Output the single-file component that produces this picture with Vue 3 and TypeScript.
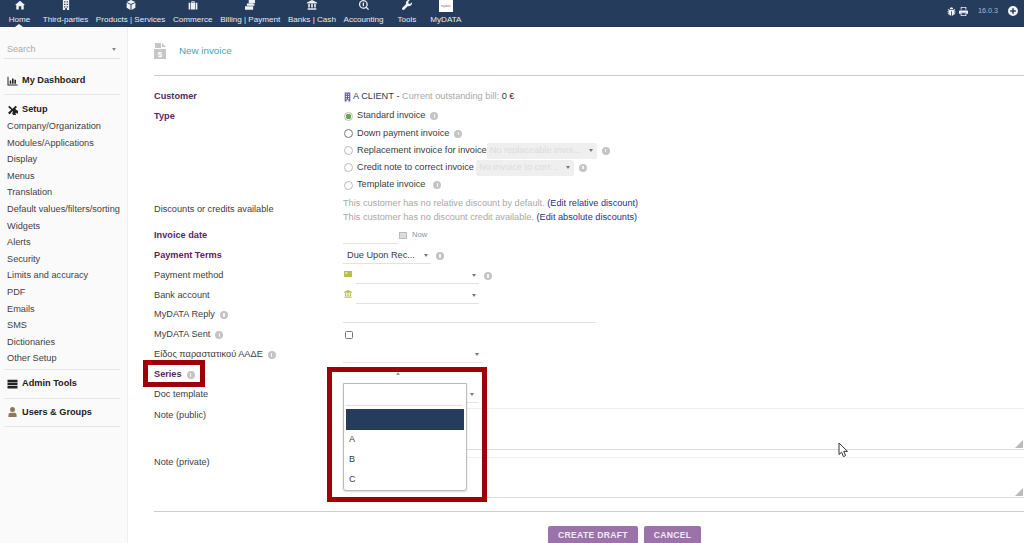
<script setup lang="ts">
const P: Record<string, string> = {
  home: 'M8 1 L16 8 L14 8 L14 15 L10 15 L10 10 L6 10 L6 15 L2 15 L2 8 L0 8 Z',
  building: 'M3 0H13V16H9.5V13H6.5V16H3Z M5 2V4H7V2Z M9 2V4H11V2Z M5 6V8H7V6Z M9 6V8H11V6Z M5 10V12H7V10Z M9 10V12H11V10Z',
  cube: 'M8 0 L15 3 L8 6.5 L1 3Z M1 4.5 L7.2 7.7 V16 L1 12.5Z M15 4.5 V12.5 L8.8 16 V7.7Z',
  briefcase: 'M5.5 2H10.5V4.5H9.2V3.3H6.8V4.5H5.5Z M1 4.5H3.4V15H1Z M4.4 4.5H11.6V15H4.4Z M12.6 4.5H15V15H12.6Z',
  money: 'M6 0H16V5H6Z M3 5.5H13.5V6.5H15V9H3Z M0 10H13V15.5H0Z',
  bank: 'M8 0 L16 4 V5.5 H0 V4Z M2 6.5H4.5V12H2Z M6.7 6.5H9.3V12H6.7Z M11.5 6.5H14V12H11.5Z M1 13H15V15.5H1Z',
  search: 'M7 0a7 7 0 0 1 5.6 11.2L16 14.6 14.6 16l-3.4-3.4A7 7 0 1 1 7 0Zm0 2a5 5 0 1 0 0 10A5 5 0 0 0 7 2Zm-1 2h2v6H6Z',
  wrench: 'M15.7 3.6 13 6.2 10.5 5.6 9.9 3.1 12.5.4A4.6 4.6 0 0 0 6.6 6.5L.6 12.5a2 2 0 0 0 2.9 2.9l6-6a4.6 4.6 0 0 0 6.2-5.8Z',
  bug: 'M5 3.5a3 3 0 0 1 6 0Z M4 5H12L13.5 3.6 14.6 4.7 13 6.3V8H15.5V9.5H13V10.6L14.8 12.4 13.7 13.5 12.4 12.3A4 4 0 0 1 8.7 15.5V7.5H7.3V15.5A4 4 0 0 1 3.6 12.3L2.3 13.5 1.2 12.4 3 10.6V9.5H.5V8H3V6.3L1.4 4.7 2.5 3.6Z',
  print: 'M3 0H13V5H11.5V1.5H4.5V5H3Z M1.5 6H14.5A1.5 1.5 0 0 1 16 7.5V12H13V10H3V12H0V7.5A1.5 1.5 0 0 1 1.5 6Z M4.5 11.5H11.5V14.5H4.5Z M3 11V16H13V11',
  plus: 'M8 0a8 8 0 1 1 0 16A8 8 0 0 1 8 0Zm-1.2 3.5v3.3H3.5v2.4h3.3v3.3h2.4V9.2h3.3V6.8H9.2V3.5Z',
  chart: 'M0 1H1.6V13.4H16V15H0Z M3.5 7H6V12.4H3.5Z M7.2 4H9.7V12.4H7.2Z M11 6H13.5V12.4H11Z',
  tools: 'M1 3 3 1 8 6 13 1 15.2 3.2 12.5 6 14.8 8.2 A3 3 0 0 1 15.5 14 L14 12.5 12.4 14 14 15.6 A3 3 0 0 1 8.6 11 L8 9.6 3.5 15 .8 12.5 6 7.6Z',
  server: 'M0 1H16V5H0Z M0 6H16V10H0Z M0 11H16V15H0Z',
  user: 'M8 0a4 4 0 1 1 0 8A4 4 0 0 1 8 0Z M1.5 16V12.5A3.5 3.5 0 0 1 5 9H11A3.5 3.5 0 0 1 14.5 12.5V16Z',
  card: 'M0 2H16V14H0Z M2 5V7H7V5Z',
  file: 'M1 0H7V5H1Z M8 0 L12 4 H8Z M0 6H12V16H0Z'
}
const nav = [
  { t: 'Home', i: 'home' },
  { t: 'Third-parties', i: 'building' },
  { t: 'Products | Services', i: 'cube' },
  { t: 'Commerce', i: 'briefcase' },
  { t: 'Billing | Payment', i: 'money' },
  { t: 'Banks | Cash', i: 'bank' },
  { t: 'Accounting', i: 'search' },
  { t: 'Tools', i: 'wrench' }
]
const setup = ['Company/Organization', 'Modules/Applications', 'Display', 'Menus', 'Translation', 'Default values/filters/sorting', 'Widgets', 'Alerts', 'Security', 'Limits and accuracy', 'PDF', 'Emails', 'SMS', 'Dictionaries', 'Other Setup']
</script>

<template>
  <div class="page">
    <header class="top">
      <nav class="nav">
        <a v-for="n in nav" :key="n.t" class="nav-item">
          <svg class="nav-ico" viewBox="0 0 16 16"><path :d="P[n.i]" fill-rule="evenodd" /></svg>
          <span>{{ n.t }}</span>
        </a>
        <a class="nav-item">
          <span class="logo">mydata</span>
          <span>MyDATA</span>
        </a>
      </nav>
      <i class="notch"></i>
      <div class="top-right">
        <svg class="tr-ico" viewBox="0 0 16 16"><path :d="P.bug" /></svg>
        <svg class="tr-ico print" viewBox="0 0 16 16"><path :d="P.print" fill-rule="evenodd" /></svg>
        <span class="ver">16.0.3</span>
        <svg class="tr-ico plus" viewBox="0 0 16 16"><path :d="P.plus" fill-rule="evenodd" /></svg>
      </div>
    </header>

    <div class="body">
      <aside class="side">
        <div class="search"><span>Search</span><b class="arrow grey"></b></div>
        <div class="sec dash">
          <div class="sec-title"><svg viewBox="0 0 16 16"><path :d="P.chart" /></svg>My Dashboard</div>
        </div>
        <div class="sec setup">
          <div class="sec-title"><svg viewBox="0 0 16 16"><path :d="P.tools" /></svg>Setup</div>
          <a v-for="s in setup" :key="s" class="side-link">{{ s }}</a>
        </div>
        <div class="sec">
          <div class="sec-title"><svg viewBox="0 0 16 16"><path :d="P.server" /></svg>Admin Tools</div>
        </div>
        <div class="sec">
          <div class="sec-title"><svg class="brown" viewBox="0 0 16 16"><path :d="P.user" /></svg>Users &amp; Groups</div>
        </div>
      </aside>

      <main class="main">
        <div class="title-row">
          <svg class="title-ico" viewBox="0 0 12 16"><path :d="P.file" /><text x="6" y="14.2" text-anchor="middle" class="dollar">$</text></svg>
          <span class="title">New invoice</span>
        </div>

        <section class="form">
          <div class="row h19"><label class="req">Customer</label>
            <div class="val client">
              <svg class="bld" viewBox="0 0 16 16"><path :d="P.building" fill-rule="evenodd" /></svg>
              <span class="cname">A CLIENT</span> - <span class="mut">Current outstanding bill:</span> 0 €
            </div>
          </div>

          <div class="row type"><label class="req top-l">Type</label>
            <div class="opts">
              <div class="opt h18"><i class="radio on"></i>Standard invoice<i class="info"></i></div>
              <div class="opt h17"><i class="radio dark"></i>Down payment invoice<i class="info"></i></div>
              <div class="opt h17"><i class="radio"></i>Replacement invoice for invoice<span class="dis w1"><em>No replaceable invoi...</em><b class="arrow"></b></span><i class="info"></i></div>
              <div class="opt h17"><i class="radio"></i>Credit note to correct invoice<span class="dis w2"><em>No invoice to corr...</em><b class="arrow"></b></span><i class="info"></i></div>
              <div class="opt h18"><i class="radio"></i>Template invoice<i class="info wide"></i></div>
            </div>
          </div>

          <div class="row disc"><label>Discounts or credits available</label>
            <div class="val lines">
              <div><span class="mut">This customer has no relative discount by default.</span> <a class="lnk">(Edit relative discount)</a></div>
              <div><span class="mut">This customer has no discount credit available.</span> <a class="lnk">(Edit absolute discounts)</a></div>
            </div>
          </div>

          <div class="row"><label class="req">Invoice date</label>
            <div class="val"><span class="line w-date"></span><i class="cal"></i><span class="now">Now</span></div>
          </div>
          <div class="row"><label class="req">Payment Terms</label>
            <div class="val"><span class="sel w-terms"><span>Due Upon Rec...</span><b class="arrow"></b></span><i class="info"></i></div>
          </div>
          <div class="row"><label>Payment method</label>
            <div class="val"><svg class="lime" viewBox="0 0 16 16"><path :d="P.card" fill-rule="evenodd" /></svg><span class="sel w-pay"><b class="arrow"></b></span><i class="info"></i></div>
          </div>
          <div class="row h19"><label>Bank account</label>
            <div class="val"><svg class="lime" viewBox="0 0 16 16"><path :d="P.bank" /></svg><span class="sel w-pay"><b class="arrow"></b></span></div>
          </div>
          <div class="row"><label>MyDATA Reply<i class="info"></i></label>
            <div class="val"><span class="line w-reply"></span></div>
          </div>
          <div class="row"><label>MyDATA Sent<i class="info"></i></label>
            <div class="val"><i class="check"></i></div>
          </div>
          <div class="row"><label>Είδος παραστατικού ΑΑΔΕ<i class="info"></i></label>
            <div class="val"><span class="sel w-eidos"><b class="arrow"></b></span></div>
          </div>
          <div class="row"><label class="req">Series<i class="info"></i></label>
            <div class="val"></div>
          </div>
          <div class="row"><label>Doc template</label>
            <div class="val"><span class="sel w-doc"><b class="arrow"></b></span></div>
          </div>
          <div class="row note h49"><label class="top-l">Note (public)</label>
            <div class="ta h41"><i class="grip"></i></div>
          </div>
          <div class="row note h48"><label class="top-l priv">Note (private)</label>
            <div class="ta h40"><i class="grip"></i></div>
          </div>
        </section>

        <div class="actions">
          <button class="btn">CREATE DRAFT</button>
          <button class="btn">CANCEL</button>
        </div>
      </main>
    </div>

    <div class="caret-up"></div>
    <div class="menu">
      <div class="menu-search"></div>
      <div class="menu-item hl"></div>
      <div class="menu-item">A</div>
      <div class="menu-item">B</div>
      <div class="menu-item">C</div>
    </div>
    <div class="mark mark-series"></div>
    <div class="mark mark-menu"></div>
    <svg class="cursor" viewBox="0 0 12 16"><path d="M1 1V12.5L3.6 10.2 5.4 14.6 7.6 13.6 5.8 9.4H9.5Z" /></svg>
  </div>
</template>

<style>
html, body { margin: 0; background: #fff; overflow: hidden; }
</style>

<style scoped>
.page { position: relative; width: 1024px; height: 543px; overflow: hidden; font: 9.2px/1.2 "Liberation Sans", Arial, sans-serif; color: #3b3b3b; background: #fff; }
.top { position: relative; display: flex; justify-content: space-between; height: 27px; background: #263c5c; color: #e6eaf0; }
.nav { display: flex; }
.nav-item { display: flex; flex-direction: column; align-items: center; min-width: 39px; padding: 0 3.8px; box-sizing: border-box; font-size: 8.1px; line-height: 10px; white-space: nowrap; }
.nav-ico { width: 10px; height: 10px; margin: 0 0 5px; fill: #eef1f5; }
.logo { display: block; width: 14px; height: 12px; margin-bottom: 3px; background: #fff; color: #777; font-size: 3px; line-height: 12px; text-align: center; }
.notch { position: absolute; left: 15px; top: 24px; border: 4px solid transparent; border-top: 0; border-bottom: 3px solid #fff; }
.top-right { display: flex; align-items: center; padding: 0 6px 5px 0; }
.tr-ico { width: 9px; height: 9px; fill: #f0f2f5; }
.print { margin-left: 3px; }
.ver { margin: 0 10px 0 10px; font-size: 7.2px; color: #aeb8c6; }
.plus { width: 10px; height: 10px; }

.body { display: flex; height: 516px; }
.side { box-sizing: border-box; width: 128px; flex: none; padding: 0 7px 0 4px; background: #fafafa; border-right: 1px solid #eee; }
.search { display: flex; align-items: center; justify-content: space-between; height: 14px; margin-top: 15px; padding: 0 4px 2px 3px; border-bottom: 1px solid #e2e2e2; color: #aaa; font-size: 9px; }
.sec { border-bottom: 1px solid #e6e6e6; padding: 7px 0 7.5px; height: 13px; }
.dash { padding: 8px 0 7px; margin-top: 7px; }
.setup { height: auto; padding: 8px 0 2.5px; }
.sec-title { display: flex; align-items: center; height: 13px; font-weight: 700; color: #222; font-size: 9.2px; padding-left: 3px; }
.sec-title svg { width: 11px; height: 10px; margin-right: 4px; fill: #222; }
.sec-title svg.brown { fill: #8a7a55; }
.side-link { display: block; height: 16.6px; line-height: 16.6px; padding-left: 3px; white-space: nowrap; color: #3f3f3f; }
.setup .sec-title { margin-bottom: 2px; }

.main { flex: 1; min-width: 0; padding-left: 26px; display: flex; flex-direction: column; }
.title-row { display: flex; flex: none; align-items: center; height: 48px; border-bottom: 1px solid #ccc; }
.title-ico { width: 12px; height: 16px; margin: 0 13px 0 0; fill: #c6c6c6; }
.dollar { fill: #fff; font-size: 8px; font-weight: 700; font-family: "Liberation Sans", sans-serif; }
.title { color: #3fa6b6; font-size: 9.8px; }
.form { flex: none; margin-top: 11px; display: flex; flex-direction: column; }
.row { display: grid; flex: none; grid-template-columns: 189px 1fr; align-items: center; height: 20px; }
.row > label { color: #3d3d3d; white-space: nowrap; display: flex; align-items: center; }
.row > .req { font-weight: 700; color: #5d2560; }
.row.h19 { height: 19px; }
.val { display: flex; align-items: center; min-width: 0; white-space: pre; }
.client { color: #2f2f3f; }
.bld { width: 9px; height: 10px; fill: #6a5aa8; margin-right: 1px; }
.cname { color: #2a3a6a; }
.mut { color: #a8a8a8; }
.row.type { height: 88px; align-items: start; }
.row > .top-l { align-self: start; padding-top: 5px; }
.row > .priv { padding-top: 3px; }
.opts { display: flex; flex-direction: column; padding-top: 1px; }
.opt { display: flex; align-items: center; flex: none; white-space: nowrap; }
.h18 { height: 18px; }
.h17 { height: 17px; }
.radio { box-sizing: border-box; width: 9px; height: 9px; margin: 0 4px 0 1px; border-radius: 50%; border: 1px solid #bbb; background: #fff; }
.radio.dark { border-color: #777; }
.radio.on { border-color: #a9c9a0; background: radial-gradient(circle, #6aa35c 0 2.6px, #fff 3px); }
.info { display: inline-block; width: 8px; height: 8px; margin-left: 5px; border-radius: 50%; background: #c4c4c4; position: relative; flex: none; }
.info::after { content: ""; position: absolute; left: 3.2px; top: 2.2px; width: 1.5px; height: 3.5px; background: #f4f4f4; }
.info.wide { margin-left: 8px; }
.dis { box-sizing: border-box; display: flex; align-items: center; justify-content: space-between; height: 16px; padding: 0 4px 0 3px; background: #efefef; border-radius: 2px; color: #dcdcdc; overflow: hidden; }
.dis em { font-style: normal; white-space: nowrap; }
.w1 { width: 110px; margin-left: 0; }
.w2 { width: 98px; margin-left: 2px; }
.arrow { flex: none; width: 0; height: 0; border: 2.5px solid transparent; border-top: 3px solid #777; border-bottom: 0; }
.arrow.grey { border-top-color: #888; }
.row.disc { height: 32px; }
.lines { display: block; line-height: 14px; margin-top: -1px; }
.lnk { color: #2b2f83; }
.line { display: inline-block; height: 14px; border-bottom: 1px solid #e2e2e2; }
.w-date { width: 55px; }
.w-reply { width: 253px; }
.cal { box-sizing: border-box; width: 8px; height: 7px; margin: -2px 0 0 1px; border: 1px solid #bbb; background: #ddd; }
.now { margin-left: 5px; color: #8a93a6; font-size: 7.6px; position: relative; top: -1px; }
.sel { box-sizing: border-box; display: flex; align-items: center; justify-content: flex-end; height: 16px; padding: 0 3px 0 4px; border-bottom: 1px solid #e2e2e2; white-space: nowrap; }
.sel > span { margin-right: auto; }
.w-terms { width: 88px; }
.w-pay { width: 123px; margin-left: 3px; }
.w-eidos { width: 140px; padding-right: 4px; }
.w-doc { width: 136px; padding-right: 5px; }
.lime { width: 10px; height: 8px; fill: #b5bf4a; margin-bottom: 4px; }
.check { box-sizing: border-box; width: 8px; height: 8px; margin-left: 2px; border: 1px solid #777; border-radius: 1.5px; }
.note { align-items: start; }
.row.h49 { height: 49px; }
.row.h48 { height: 48px; }
.ta { position: relative; box-sizing: border-box; margin-top: 3px; border-top: 1px solid #eee; border-bottom: 1px solid #ddd; }
.h41 { height: 42px; }
.h40 { height: 41px; }
.grip { position: absolute; right: 1px; bottom: 1px; width: 0; height: 0; border-left: 8px solid transparent; border-bottom: 8px solid #bbb; }
.actions { flex: none; margin-top: 9px; padding-top: 14px; border-top: 1px solid #ccc; padding-left: 394px; display: flex; gap: 6px; }
.btn { box-sizing: border-box; height: 22px; padding: 0 10px 4px; border: 0; border-radius: 2px; background: #9c72aa; color: #f2eaf4; font: 700 8.6px "Liberation Sans", sans-serif; letter-spacing: .3px; }

.caret-up { position: absolute; left: 395.5px; top: 372px; border: 2.5px solid transparent; border-bottom: 3px solid #999; border-top: 0; }
.menu { position: absolute; left: 343px; top: 383px; box-sizing: border-box; width: 124px; height: 108px; padding: 0 2px; background: #fff; border: 1px solid #bbb; border-radius: 0 0 3px 3px; box-shadow: 0 1px 2px rgba(0,0,0,.15); }
.menu-search { height: 21px; margin-right: 2px; border-bottom: 1px solid #ddd; }
.menu-item { height: 20px; line-height: 20px; padding-left: 3px; color: #3a3a3a; font-size: 9px; }
.menu-item.hl { height: 21px; margin: 3px 0 -1px; background: #263c5c; }
.mark { position: absolute; box-sizing: border-box; border: 5px solid #a00008; }
.mark-series { left: 143px; top: 360px; width: 62px; height: 27px; }
.mark-menu { left: 327px; top: 367px; width: 160px; height: 135px; }
.cursor { position: absolute; left: 838px; top: 442px; width: 12px; height: 16px; fill: #fff; stroke: #333; stroke-width: 1; }
</style>
